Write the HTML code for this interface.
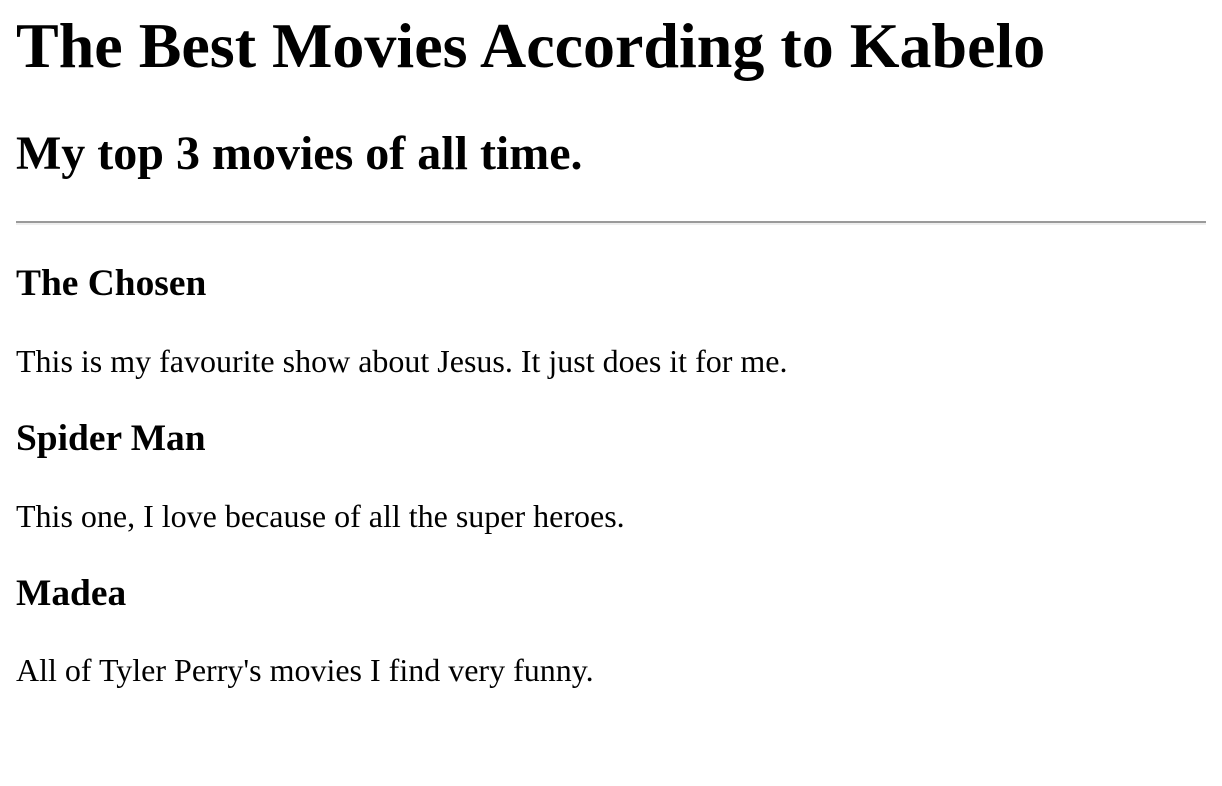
<!DOCTYPE html>
<html><head><style>
html,body{margin:0;padding:0;background:#fff}
body{margin:0 16px 16px 16px;padding-top:0.1px;font-family:"Liberation Serif",serif;font-size:32px;color:#000}
h1{font-size:64px;margin:9px 0 42.88px 0;font-weight:bold}
h2{font-size:48px;margin:39.84px 0;font-weight:bold}
h3{font-size:37.44px;margin:37.44px 0;font-weight:bold}
p{margin:32px 0}
hr{border:none;border-top:2px solid #9a9a9a;border-bottom:2px solid #eee;margin:16px 0;height:0}
</style></head><body>
<h1>The Best Movies According to Kabelo</h1>
<h2>My top 3 movies of all time.</h2>
<hr>
<h3>The Chosen</h3>
<p>This is my favourite show about Jesus. It just does it for me.</p>
<h3>Spider Man</h3>
<p>This one, I love because of all the super heroes.</p>
<h3>Madea</h3>
<p>All of Tyler Perry's movies I find very funny.</p>
</body></html>
